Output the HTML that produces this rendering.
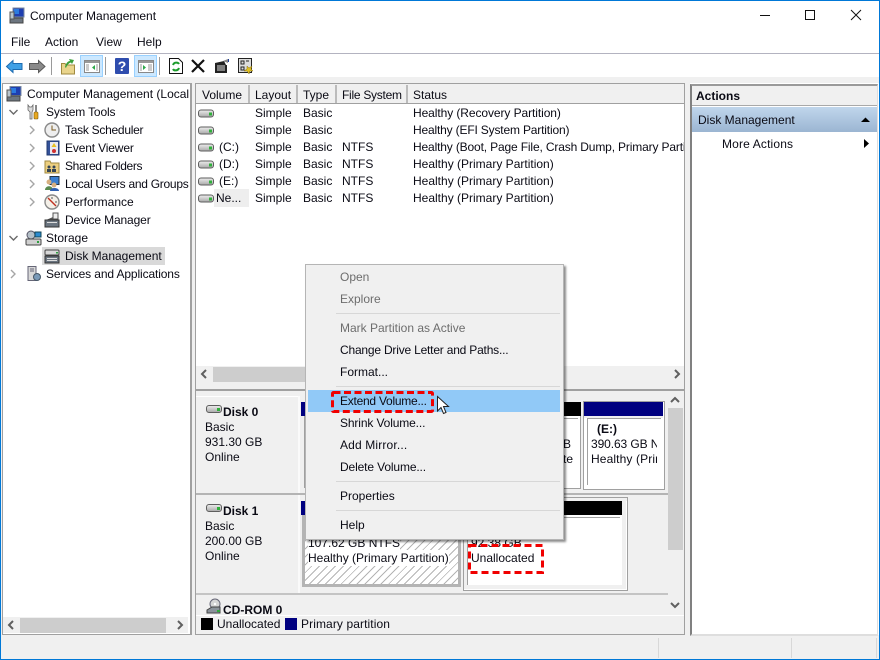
<!DOCTYPE html>
<html><head><meta charset="utf-8">
<style>
html,body{margin:0;padding:0;background:#fff}
#w{position:relative;width:880px;height:660px;overflow:hidden;background:#fff;font:12px/16px "Liberation Sans",sans-serif;color:#000}
.a{position:absolute}
.t{position:absolute;white-space:nowrap;line-height:16px;color:#0a0a14}
.g{color:#6d6d6d}
svg{position:absolute;overflow:visible}
</style></head><body><div id="w">

<div class="a" style="left:0;top:0;width:880px;height:1px;background:#0078d7"></div>
<div class="a" style="left:0;top:0;width:1px;height:660px;background:#0078d7"></div>
<div class="a" style="left:879px;top:0;width:1px;height:660px;background:#0078d7"></div>
<div class="a" style="left:0;top:659px;width:880px;height:1px;background:#0078d7"></div>

<svg style="left:9px;top:7px" width="18" height="18"><rect x="4" y="1" width="11" height="9" fill="#1f3fb0" stroke="#7a8aa0"/><rect x="5" y="2" width="5" height="5" fill="#2c7be0"/><rect x="1" y="11" width="13" height="5" fill="#6d7680" stroke="#444"/><rect x="1" y="5" width="4" height="7" fill="#b8c4cc" stroke="#555"/></svg>
<span class="t" style="left:30px;top:8px">Computer Management</span>

<svg style="left:760px;top:8px" width="110" height="16" fill="none" stroke="#111"><path d="M0 7.5H10"/><rect x="45.500" y="2.500" width="9" height="9"/><path d="M91 2L101 12M101 2L91 12"/></svg>

<span class="t" style="left:11px;top:34px">File</span>
<span class="t" style="left:45px;top:34px">Action</span>
<span class="t" style="left:96px;top:34px">View</span>
<span class="t" style="left:137px;top:34px">Help</span>
<div class="a" style="left:1px;top:53px;width:878px;height:1px;background:#b3b3c0"></div>

<!-- toolbar -->
<svg style="left:6px;top:60px" width="17" height="13"><path d="M.5 6.500L7 .5V3.500H16V9.500H7V12.500Z" fill="#3fa0e6" stroke="#1d6bb0"/></svg>
<svg style="left:29px;top:60px" width="17" height="13"><path d="M16 6.500L9.500 .5V3.500H.5V9.500H9.500V12.500Z" fill="#8a8a8a" stroke="#5a5a5a"/></svg>
<div class="a" style="left:51px;top:57px;width:1px;height:18px;background:#9a9a9a"></div>
<svg style="left:60px;top:57px" width="16" height="18"><path d="M1.500 6.500H5L6 8H14.500V17H1.500Z" fill="#e9d48c" stroke="#a08a40"/><path d="M5 10C6 6 8 4 10 4L9 2L14 3L12 7L11 5.500C9 6 7 8 6 11Z" fill="#3aa03a"/></svg>
<div class="a" style="left:80px;top:55px;width:21px;height:20px;background:#cce8ff;border:1px solid #99d1ff"></div>
<svg style="left:84px;top:60px" width="16" height="13"><rect x=".5" y=".5" width="15" height="12" fill="#fff" stroke="#888"/><rect x="1" y="1" width="14" height="2" fill="#999"/><rect x="2" y="4" width="3" height="7" fill="#ccc"/><path d="M11 5V10L8 7.500Z" fill="#2ea84a"/><rect x="12" y="4" width="2" height="7" fill="#ccc"/></svg>
<div class="a" style="left:105px;top:57px;width:1px;height:18px;background:#9a9a9a"></div>
<div class="a" style="left:115px;top:58px;width:14px;height:16px;background:#2f4dae;border-radius:1px"></div>
<span class="a" style="left:115px;top:58px;width:14px;text-align:center;font:bold 14px/16px 'Liberation Sans',sans-serif;color:#fff">?</span>
<div class="a" style="left:134px;top:55px;width:21px;height:20px;background:#cce8ff;border:1px solid #99d1ff"></div>
<svg style="left:138px;top:60px" width="16" height="13"><rect x=".5" y=".5" width="15" height="12" fill="#fff" stroke="#888"/><rect x="1" y="1" width="14" height="2" fill="#999"/><path d="M5 5V10L8 7.500Z" fill="#2ea84a"/><rect x="10" y="4" width="4" height="7" fill="#ccc"/><rect x="2" y="4" width="2" height="7" fill="#ccc"/></svg>
<div class="a" style="left:159px;top:57px;width:1px;height:18px;background:#9a9a9a"></div>
<svg style="left:169px;top:58px" width="15" height="17"><path d="M.5 .5H9.500L13.500 4.500V15.500H.5Z" fill="#fff" stroke="#111"/><path d="M4 7C5 4 9 4 10 6M10 10C9 13 5 13 4 11" fill="none" stroke="#1c9c2c" stroke-width="2"/></svg>
<svg style="left:191px;top:59px" width="14" height="14"><path d="M1 1L13 13M13 1L1 13" stroke="#111" stroke-width="2.200"/></svg>
<svg style="left:214px;top:58px" width="17" height="16"><path d="M1 5L10 3L12 7H13V15H1Z" fill="#222"/><path d="M3 8H11M3 10H11M3 12H11" stroke="#ddd"/><path d="M9 3L14 1V5" fill="#888"/><rect x="14" y="1" width="1" height="3" fill="#1b3a9a"/></svg>
<svg style="left:238px;top:58px" width="16" height="16"><rect x=".5" y=".5" width="13" height="14" fill="#ddd" stroke="#222"/><path d="M3 3H6V6H3ZM8 3H11M3 9H6V12H3Z" fill="none" stroke="#222"/><path d="M9 8L11 10L14 8L13 11L15 13L12 13L11 16L9 13L6 13L9 11Z" fill="#e0c020" stroke="#8a7010" stroke-width=".5"/></svg>

<div class="a" style="left:1px;top:77px;width:878px;height:6px;background:#f0f0f0"></div>

<!-- side gutters -->
<div class="a" style="left:191px;top:83px;width:4px;height:553px;background:#f0f0f0"></div>
<div class="a" style="left:685px;top:83px;width:5px;height:553px;background:#f0f0f0"></div>
<div class="a" style="left:1px;top:83px;width:1px;height:553px;background:#f0f0f0"></div>
<div class="a" style="left:1px;top:635px;width:878px;height:1px;background:#f0f0f0"></div>

<!-- left pane -->
<div class="a" style="left:2px;top:83px;width:187px;height:550px;border:solid #a0a0a0;border-width:1px 2px 1px 1px"></div>
<svg style="left:6px;top:86px" width="16" height="16"><rect x="4" y="0.500" width="11" height="9" fill="#1f3fb0" stroke="#7a8aa0"/><rect x="5" y="2" width="5" height="5" fill="#2c7be0"/><rect x="1" y="10" width="13" height="5" fill="#6d7680" stroke="#444"/><rect x="1" y="4" width="4" height="7" fill="#b8c4cc" stroke="#555"/></svg>
<span class="t" style="left:27px;top:86px;width:162px;overflow:hidden">Computer Management (Local</span>
<svg style="left:0;top:0" width="190" height="290" fill="none" stroke="#6a6a6a" stroke-width="1.400"><path d="M9.500 110L13.500 114L17.500 110M9.500 236L13.500 240L17.500 236"/><g stroke="#a6a6a6"><path d="M30 126L34 130L30 134M30 144L34 148L30 152M30 162L34 166L30 170M30 180L34 184L30 188M30 198L34 202L30 206M11 270L15 274L11 278"/></g></svg>
<span class="t" style="left:46px;top:104px;letter-spacing:-.15px">System Tools</span>
<svg style="left:26px;top:104px" width="14" height="16"><path d="M2 1V6L4 8V15H6V8L7 6V1L5.500 3H3.500Z" fill="#ddd" stroke="#666" stroke-width=".8"/><rect x="9" y="1" width="2" height="7" fill="#888"/><rect x="8" y="8" width="4" height="7" rx="1" fill="#e8a820" stroke="#7a5a10" stroke-width=".6"/></svg>

<svg style="left:44px;top:122px" width="16" height="16"><circle cx="8" cy="8" r="7" fill="#eee" stroke="#888" stroke-width="1.400"/><path d="M8 3.500V8H12" stroke="#7a5a20" fill="none"/></svg>
<span class="t" style="left:65px;top:122px;letter-spacing:-.27px">Task Scheduler</span>
<svg style="left:45px;top:140px" width="15" height="16"><rect x="2" y="1" width="12" height="14" fill="#34529a" stroke="#223a70"/><rect x="5" y="2" width="8" height="12" fill="#e8e8f0"/><path d="M9 3L11.500 7H6.500Z" fill="#e8c020"/><circle cx="9" cy="11" r="2" fill="#d03030"/></svg>
<span class="t" style="left:65px;top:140px;letter-spacing:-.15px">Event Viewer</span>
<svg style="left:44px;top:158px" width="16" height="16"><path d="M1 3H6L7 5H15V15H1Z" fill="#eccf80" stroke="#a08a40"/><circle cx="5" cy="9" r="1.500" fill="#345"/><rect x="3" y="11" width="4" height="3" fill="#345"/><circle cx="10" cy="9" r="1.500" fill="#345"/><rect x="8" y="11" width="4" height="3" fill="#345"/></svg>
<span class="t" style="left:65px;top:158px;letter-spacing:-.35px">Shared Folders</span>
<svg style="left:44px;top:176px" width="16" height="16"><rect x="6" y="0.500" width="9" height="8" fill="#3a7fd0" stroke="#234"/><circle cx="5" cy="6" r="2.500" fill="#d8b080"/><path d="M1 14C1 9 9 9 9 14Z" fill="#5a8a50"/><circle cx="10" cy="9" r="2.500" fill="#d8b080"/><path d="M6 15C6 11 15 11 15 15Z" fill="#3060b0"/></svg>
<span class="t" style="left:65px;top:176px;letter-spacing:-.27px">Local Users and Groups</span>
<svg style="left:44px;top:194px" width="16" height="16"><circle cx="8" cy="8" r="7" fill="#f4f0e8" stroke="#888" stroke-width="1.400"/><path d="M4 4L8 8L12 12" stroke="#c03020" stroke-width="1.400"/><path d="M8 3V5M13 8H11" stroke="#555"/></svg>
<span class="t" style="left:65px;top:194px">Performance</span>
<svg style="left:44px;top:212px" width="16" height="16"><rect x="9" y="1" width="5" height="6" fill="#eee" stroke="#555"/><path d="M2 8L9 5V8Z" fill="#555"/><rect x="1" y="8" width="14" height="7" fill="#6b7580" stroke="#333"/><rect x="3" y="10" width="10" height="1" fill="#ddd"/></svg>
<span class="t" style="left:65px;top:212px;letter-spacing:-.13px">Device Manager</span>

<svg style="left:25px;top:230px" width="17" height="16"><circle cx="6" cy="5" r="4" fill="#b5c0c8" stroke="#556"/><rect x="10" y="2" width="6" height="5" fill="#2c8bd0" stroke="#145"/><rect x="1" y="9" width="15" height="6" rx="1" fill="#d0d0d0" stroke="#444"/><rect x="12" y="11" width="2" height="2" fill="#30a040"/></svg>
<span class="t" style="left:46px;top:230px">Storage</span>

<div class="a" style="left:42px;top:247px;width:123px;height:18px;background:#d9d9d9"></div>
<svg style="left:44px;top:248px" width="16" height="16"><rect x="1" y="2" width="14" height="5" rx="1" fill="#d8d8d8" stroke="#444"/><rect x="1" y="8" width="14" height="7" fill="#6b7580" stroke="#333"/><rect x="12" y="4" width="2" height="1.500" fill="#30a040"/><path d="M3 10.500H13M3 12.500H13" stroke="#ddd"/></svg>
<span class="t" style="left:65px;top:248px">Disk Management</span>

<svg style="left:26px;top:266px" width="16" height="16"><rect x="2" y="0.500" width="8" height="14" fill="#d8d8d8" stroke="#667"/><path d="M4 3H8M4 5H8" stroke="#667"/><circle cx="11" cy="11" r="3.500" fill="#7a9ab8" stroke="#456"/></svg>
<span class="t" style="left:46px;top:266px;letter-spacing:-.12px">Services and Applications</span>

<div class="a" style="left:3px;top:617px;width:185px;height:16px;background:#f0f0f0"></div>
<div class="a" style="left:20px;top:618px;width:146px;height:15px;background:#cdcdcd"></div>
<svg style="left:0;top:610px" width="190" height="24" fill="none" stroke="#606060" stroke-width="2"><path d="M13 11L9 15L13 19M178 11L182 15L178 19"/></svg>

<!-- middle pane -->
<div class="a" style="left:195px;top:83px;width:488px;height:550px;border:solid #a0a0a0;border-width:1px 1px 1px 1px"></div>
<div class="a" style="left:196px;top:84px;width:488px;height:19px;background:#f0f0f0"></div>
<div class="a" style="left:196px;top:103px;width:488px;height:1px;background:#a0a0a0"></div>
<div class="a" style="left:248px;top:85px;width:2px;height:18px;background:#bbb"></div>
<div class="a" style="left:296px;top:85px;width:2px;height:18px;background:#bbb"></div>
<div class="a" style="left:335px;top:85px;width:2px;height:18px;background:#bbb"></div>
<div class="a" style="left:406px;top:85px;width:2px;height:18px;background:#bbb"></div>
<span class="t" style="left:202px;top:87px">Volume</span>
<span class="t" style="left:255px;top:87px">Layout</span>
<span class="t" style="left:303px;top:87px">Type</span>
<span class="t" style="left:342px;top:87px;letter-spacing:-.27px">File System</span>
<span class="t" style="left:413px;top:87px">Status</span>

<div class="a" style="left:214px;top:189px;width:35px;height:18px;background:#eee"></div>
<svg style="left:198px;top:105px" width="18" height="100"><defs><linearGradient id="dg" x1="0" y1="0" x2="0" y2="1"><stop offset="0" stop-color="#eeeeee"/><stop offset="1" stop-color="#a8a8a8"/></linearGradient><g id="d"><rect x=".5" y=".5" width="15" height="7" rx="2.500" fill="url(#dg)" stroke="#5e5e5e"/><rect x="11" y="3" width="3" height="3" fill="#2fb03a"/></g></defs>
<use href="#d" y="4.500"/><use href="#d" y="21.500"/><use href="#d" y="38.500"/><use href="#d" y="55.500"/><use href="#d" y="72.500"/><use href="#d" y="89.500"/></svg>

<span class="t" style="left:255px;top:105px">Simple</span><span class="t" style="left:303px;top:105px">Basic</span><span class="t" style="left:413px;top:105px;letter-spacing:-.08px">Healthy (Recovery Partition)</span>
<span class="t" style="left:255px;top:122px">Simple</span><span class="t" style="left:303px;top:122px">Basic</span><span class="t" style="left:413px;top:122px;letter-spacing:-.17px">Healthy (EFI System Partition)</span>
<span class="t" style="left:219px;top:139px">(C:)</span><span class="t" style="left:255px;top:139px">Simple</span><span class="t" style="left:303px;top:139px">Basic</span><span class="t" style="left:342px;top:139px">NTFS</span><span class="t" style="left:413px;top:139px;width:271px;overflow:hidden;letter-spacing:-.15px">Healthy (Boot, Page File, Crash Dump, Primary Partition)</span>
<span class="t" style="left:219px;top:156px">(D:)</span><span class="t" style="left:255px;top:156px">Simple</span><span class="t" style="left:303px;top:156px">Basic</span><span class="t" style="left:342px;top:156px">NTFS</span><span class="t" style="left:413px;top:156px">Healthy (Primary Partition)</span>
<span class="t" style="left:219px;top:173px">(E:)</span><span class="t" style="left:255px;top:173px">Simple</span><span class="t" style="left:303px;top:173px">Basic</span><span class="t" style="left:342px;top:173px">NTFS</span><span class="t" style="left:413px;top:173px">Healthy (Primary Partition)</span>
<span class="t" style="left:216px;top:190px">Ne...</span><span class="t" style="left:255px;top:190px">Simple</span><span class="t" style="left:303px;top:190px">Basic</span><span class="t" style="left:342px;top:190px">NTFS</span><span class="t" style="left:413px;top:190px">Healthy (Primary Partition)</span>

<!-- list hscroll -->
<div class="a" style="left:196px;top:366px;width:488px;height:17px;background:#f0f0f0"></div>
<div class="a" style="left:213px;top:367px;width:200px;height:15px;background:#cdcdcd"></div>
<svg style="left:0;top:360px" width="690" height="24" fill="none" stroke="#606060" stroke-width="2"><path d="M206 10L202 14L206 18M675 10L679 14L675 18"/></svg>
<div class="a" style="left:196px;top:383px;width:488px;height:6px;background:#f0f0f0"></div>
<div class="a" style="left:196px;top:389px;width:488px;height:2px;background:#a0a0a0"></div>

<!-- disk area -->
<div class="a" style="left:196px;top:391px;width:488px;height:224px;background:#f0f0f0"></div>
<div class="a" style="left:196px;top:396px;width:103px;height:1px;background:#fff"></div>
<div class="a" style="left:298px;top:396px;width:2px;height:198px;background:#fafafa"></div>
<div class="a" style="left:196px;top:493px;width:472px;height:2px;background:#b4b4b4"></div>
<div class="a" style="left:196px;top:593px;width:472px;height:2px;background:#c4c4c4"></div>

<svg style="left:206px;top:405px" width="18" height="10"><use href="#d"/></svg>
<span class="t" style="left:223px;top:404px;font-weight:bold">Disk 0</span>
<span class="t" style="left:205px;top:419px">Basic</span>
<span class="t" style="left:205px;top:434px">931.30 GB</span>
<span class="t" style="left:205px;top:449px">Online</span>

<svg style="left:206px;top:504px" width="18" height="10"><use href="#d"/></svg>
<span class="t" style="left:223px;top:503px;font-weight:bold">Disk 1</span>
<span class="t" style="left:205px;top:518px">Basic</span>
<span class="t" style="left:205px;top:533px">200.00 GB</span>
<span class="t" style="left:205px;top:548px">Online</span>

<svg style="left:206px;top:598px" width="17" height="16"><circle cx="9" cy="6" r="5" fill="#d5d5d5" stroke="#667"/><circle cx="9" cy="6" r="1.200" fill="#fff"/><path d="M1 12L6 9H14V15H1Z" fill="#8a929a" stroke="#444"/><rect x="11" y="12" width="3" height="2" fill="#2fa83a"/></svg>
<span class="t" style="left:223px;top:602px;font-weight:bold">CD-ROM 0</span>

<!-- disk0 partitions -->
<div class="a" style="left:301px;top:402px;width:5px;height:14px;background:#000080"></div>
<div class="a" style="left:304px;top:416px;width:2px;height:72px;background:#a0a0a0"></div>
<div class="a" style="left:520px;top:402px;width:61px;height:14px;background:#000"></div>
<div class="a" style="left:520px;top:416px;width:60px;height:72px;background:#fff;border-right:1px solid #a0a0a0;border-bottom:1px solid #a0a0a0"></div>
<div class="a" style="left:520px;top:418px;width:58px;height:1px;background:#a0a0a0"></div>
<span class="t" style="left:563px;top:436px">B</span>
<span class="t" style="left:563px;top:451px">te</span>

<div class="a" style="left:583px;top:401px;width:80px;height:87px;background:#fff;border:1px solid #a0a0a0"></div>
<div class="a" style="left:584px;top:402px;width:79px;height:14px;background:#000080"></div>
<div class="a" style="left:584px;top:416px;width:79px;height:2px;background:#f0f0f0"></div>
<div class="a" style="left:587px;top:418px;width:74px;height:1px;background:#a0a0a0"></div>
<div class="a" style="left:587px;top:418px;width:1px;height:67px;background:#a0a0a0"></div>
<span class="t" style="left:597px;top:421px;font-weight:bold">(E:)</span>
<span class="t" style="left:591px;top:436px;width:66px;overflow:hidden;letter-spacing:-.1px">390.63 GB NTFS</span>
<span class="t" style="left:591px;top:451px;width:66px;overflow:hidden;letter-spacing:.12px">Healthy (Primary Partition)</span>

<!-- disk1 partitions -->
<div class="a" style="left:301px;top:501px;width:5px;height:14px;background:#000080"></div>
<div class="a" style="left:300px;top:515px;width:162px;height:77px;background:#f0f0f0"></div>
<div class="a" style="left:302px;top:515px;width:153px;height:66px;border:3px solid #b4b4b4;background:repeating-linear-gradient(135deg,#fff 0,#fff 4.600px,#b4b4b4 4.600px,#b4b4b4 5.600px)"></div>
<span class="t" style="left:308px;top:535px;background:#fff">107.62 GB NTFS</span>
<span class="t" style="left:308px;top:550px;background:#fff">Healthy (Primary Partition)</span>

<div class="a" style="left:463px;top:497px;width:163px;height:92px;background:#fff;border:1px solid #a0a0a0"></div>
<div class="a" style="left:464px;top:498px;width:163px;height:3px;background:#f0f0f0"></div>
<div class="a" style="left:464px;top:501px;width:3px;height:88px;background:#f0f0f0"></div>
<div class="a" style="left:622px;top:498px;width:4px;height:91px;background:#f0f0f0"></div>
<div class="a" style="left:464px;top:585px;width:162px;height:4px;background:#f0f0f0"></div>
<div class="a" style="left:467px;top:501px;width:155px;height:14px;background:#000"></div>
<div class="a" style="left:467px;top:517px;width:153px;height:1px;background:#a0a0a0"></div>
<div class="a" style="left:467px;top:517px;width:1px;height:68px;background:#a0a0a0"></div>
<span class="t" style="left:471px;top:535px">92.38 GB</span>
<span class="t" style="left:471px;top:550px">Unallocated</span>
<svg style="left:0;top:0" width="880" height="660" fill="none"><rect x="469.500" y="545.500" width="73" height="27" stroke="#f00000" stroke-width="3" stroke-dasharray="7 4"/></svg>

<!-- vscroll -->
<div class="a" style="left:668px;top:391px;width:16px;height:224px;background:#f0f0f0"></div>
<div class="a" style="left:668px;top:408px;width:15px;height:142px;background:#cdcdcd"></div>
<svg style="left:668px;top:390px" width="16" height="225" fill="none" stroke="#606060" stroke-width="2"><path d="M3 12L7 8L11 12M3 213L7 217L11 213"/></svg>

<!-- legend -->
<div class="a" style="left:196px;top:615px;width:488px;height:1px;background:#fff"></div>
<div class="a" style="left:196px;top:616px;width:488px;height:18px;background:#f0f0f0"></div>
<div class="a" style="left:201px;top:618px;width:12px;height:12px;background:#000"></div>
<span class="t" style="left:217px;top:616px">Unallocated</span>
<div class="a" style="left:285px;top:618px;width:12px;height:12px;background:#000080"></div>
<span class="t" style="left:301px;top:616px;letter-spacing:.1px">Primary partition</span>

<!-- actions pane -->
<div class="a" style="left:690px;top:84px;width:185px;height:548px;border:solid #dedede;border-width:2px 1px 2px 2px;border-left-color:#808080;border-top-color:#9a9a9a;background:#fff"></div>
<div class="a" style="left:692px;top:86px;width:185px;height:19px;background:#f0f0f0"></div>
<div class="a" style="left:692px;top:105px;width:185px;height:1px;background:#a9a9a9"></div>
<span class="t" style="left:696px;top:88px;font-weight:bold">Actions</span>
<div class="a" style="left:692px;top:107px;width:185px;height:25px;background:linear-gradient(#c0d6ec,#9bb5d2)"></div>
<span class="t" style="left:698px;top:112px">Disk Management</span>
<svg style="left:860px;top:116px" width="12" height="36"><path d="M1 6H10L5.500 1.500Z" fill="#000"/><path d="M4 23V32L9 27.500Z" fill="#000"/></svg>
<span class="t" style="left:722px;top:136px;letter-spacing:.15px">More Actions</span>

<!-- status bar -->
<div class="a" style="left:1px;top:636px;width:878px;height:23px;background:#f0f0f0"></div>
<div class="a" style="left:658px;top:638px;width:1px;height:20px;background:#d8d8d8"></div>
<div class="a" style="left:791px;top:638px;width:1px;height:20px;background:#d8d8d8"></div>
<div class="a" style="left:876px;top:638px;width:1px;height:20px;background:#d8d8d8"></div>

<!-- context menu -->
<div class="a" style="left:305px;top:264px;width:257px;height:274px;background:#f0f0f0;border:1px solid #b5b5b5;box-shadow:2px 2px 2px rgba(0,0,0,.45)"></div>
<div class="a" style="left:308px;top:390px;width:252px;height:22px;background:#91c9f7"></div>
<div class="a" style="left:336px;top:313px;width:224px;height:1px;background:#d7d7d7"></div>
<div class="a" style="left:336px;top:386px;width:224px;height:1px;background:#d7d7d7"></div>
<div class="a" style="left:336px;top:481px;width:224px;height:1px;background:#d7d7d7"></div>
<div class="a" style="left:336px;top:510px;width:224px;height:1px;background:#d7d7d7"></div>
<span class="t g" style="left:340px;top:269px">Open</span>
<span class="t g" style="left:340px;top:291px">Explore</span>
<span class="t g" style="left:340px;top:320px">Mark Partition as Active</span>
<span class="t" style="left:340px;top:342px;letter-spacing:-.2px">Change Drive Letter and Paths...</span>
<span class="t" style="left:340px;top:364px">Format...</span>
<span class="t" style="left:340px;top:393px;letter-spacing:-.25px">Extend Volume...</span>
<span class="t" style="left:340px;top:415px;letter-spacing:-.13px">Shrink Volume...</span>
<span class="t" style="left:340px;top:437px;letter-spacing:.15px">Add Mirror...</span>
<span class="t" style="left:340px;top:459px;letter-spacing:-.13px">Delete Volume...</span>
<span class="t" style="left:340px;top:488px">Properties</span>
<span class="t" style="left:340px;top:517px">Help</span>

<svg style="left:0;top:0" width="880" height="660" fill="none"><rect x="332.500" y="392.500" width="100" height="19" rx="1" stroke="#f00000" stroke-width="3" stroke-dasharray="7 3.500"/></svg>
<svg style="left:437px;top:396px" width="14" height="20"><path d="M.5 .5V15L4 11.500L6.500 17.500L9 16.500L6.500 10.500H11.500Z" fill="#fff" stroke="#222"/></svg>

</div></body></html>
